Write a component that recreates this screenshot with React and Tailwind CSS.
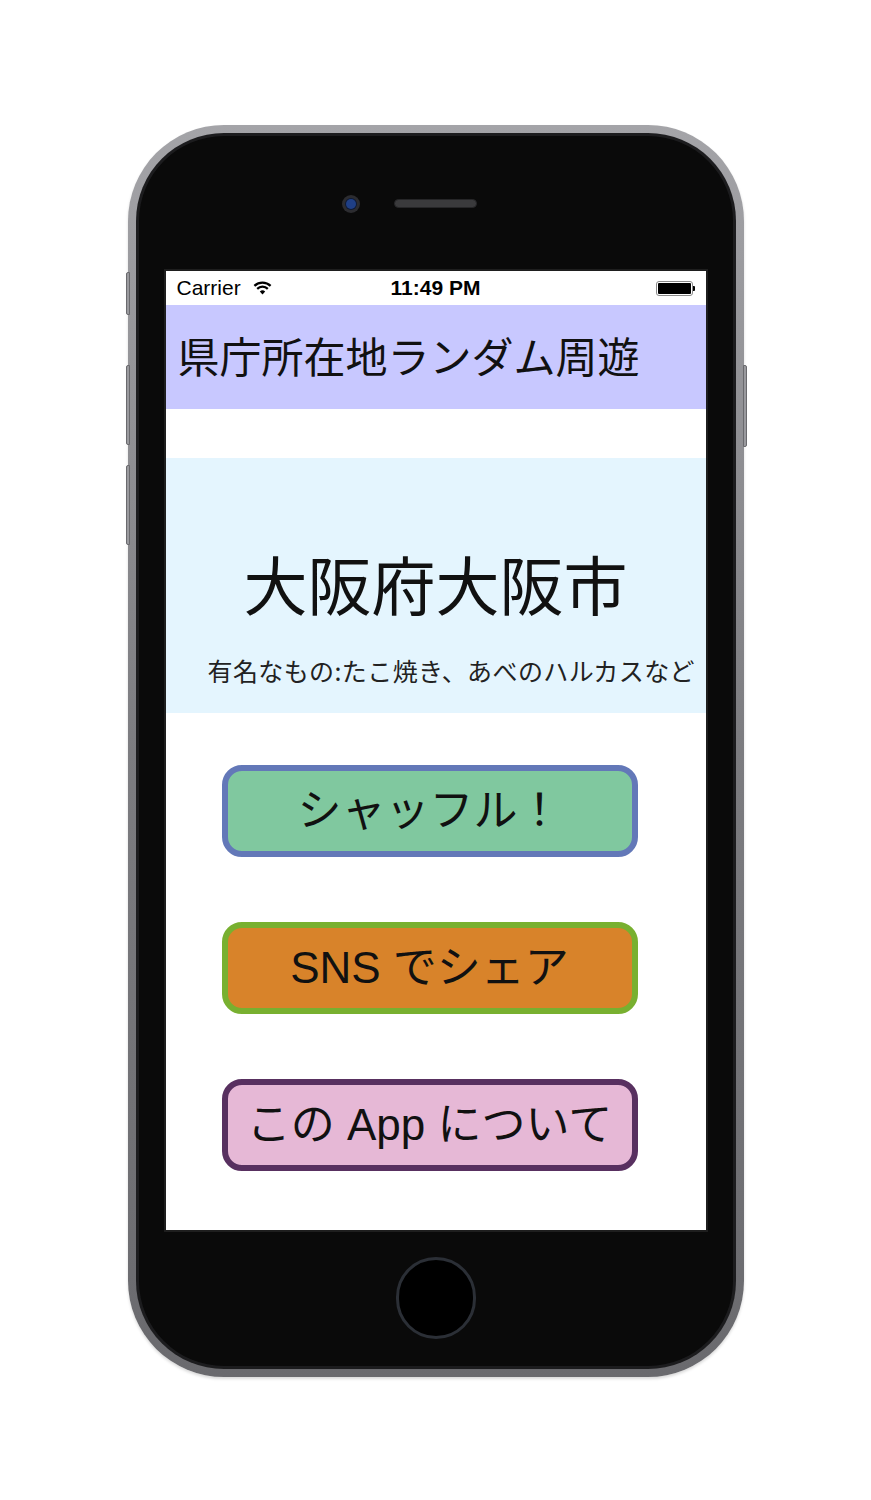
const latin = { fontFamily: '"Liberation Sans", "Noto Sans CJK JP", sans-serif' };

function WifiIcon() {
  return (
    <svg width="19" height="15" viewBox="0 0 18 15" className="ml-[12px]">
      <path d="M0.9 4.9 A11.5 11.5 0 0 1 17.1 4.9" fill="none" stroke="#000" strokeWidth="2.2" />
      <path d="M3.7 7.9 A7.5 7.5 0 0 1 14.3 7.9" fill="none" stroke="#000" strokeWidth="2.2" />
      <path d="M9 13.5 L6.3 10.6 A3.8 3.8 0 0 1 11.7 10.6 Z" fill="#000" />
    </svg>
  );
}

function Battery() {
  return (
    <div className="flex items-center">
      <div className="w-[37px] h-[15px] border border-[#8a8a8a] rounded-[3px] p-[1px]">
        <div className="w-full h-full bg-black rounded-[1px]" />
      </div>
      <div className="w-[2px] h-[5px] bg-black rounded-r-[1px]" />
    </div>
  );
}

function AppButton({ label, className }) {
  return (
    <div
      className={`w-[416px] h-[92px] ml-[56px] border-[6px] rounded-[20px] flex items-center justify-center text-[44px] text-[#111] leading-none ${className}`}
      style={latin}
    >
      <span>{label}</span>
    </div>
  );
}

function Screen() {
  return (
    <div
      className="w-[540px] h-[959px] bg-white flex flex-col ring-2 ring-[#1e1e1e]"
      style={{ fontFamily: '"Noto Sans CJK JP", sans-serif' }}
    >
      {/* status bar */}
      <div className="h-[34px] grid grid-cols-3 items-center px-[11px] text-black text-[21px]" style={latin}>
        <div className="flex items-center">
          <span>Carrier</span>
          <WifiIcon />
        </div>
        <div className="text-center font-semibold">11:49 PM</div>
        <div className="flex justify-end">
          <Battery />
        </div>
      </div>

      {/* header */}
      <div className="h-[104px] bg-[#C8C8FF] flex items-center pl-[12px] pb-[5px] text-[42px] text-[#111] leading-none">
        県庁所在地ランダム周遊
      </div>

      {/* city card */}
      <div className="mt-[49px] h-[255px] bg-[#E4F5FE] flex flex-col">
        <div className="pt-[92px] text-center text-[64px] leading-none text-[#111]">大阪府大阪市</div>
        <div className="mt-[44px] pl-[42px] text-[25px] tracking-[0.4px] leading-none text-[#222] whitespace-nowrap">
          有名なもの:たこ焼き、あべのハルカスなど
        </div>
      </div>

      {/* buttons */}
      <div className="mt-[52px] flex flex-col gap-[65px]">
        <AppButton label="シャッフル！" className="bg-[#80C89F] border-[#6378B8]" />
        <AppButton label="SNS でシェア" className="bg-[#D8832A] border-[#78B030]" />
        <AppButton label="この App について" className="bg-[#E6B8D6] border-[#583060]" />
      </div>
    </div>
  );
}

export default function App() {
  return (
    <div className="w-[871px] h-[1500px] bg-white pt-[125px]">
      <div className="relative mx-auto w-[616px] h-[1252px] rounded-[96px] bg-linear-to-b from-[#a4a4a8] via-[#7c7c80] to-[#6a6a6e] p-[8px] shadow-[0_2px_3px_rgba(0,0,0,0.15)]">
        {/* side buttons */}
        <div className="absolute left-[-2px] top-[147px] w-[4px] h-[43px] rounded-l-[2px] bg-[#9a9a9e] border border-[#6a6a6e]" />
        <div className="absolute left-[-2px] top-[240px] w-[4px] h-[80px] rounded-l-[2px] bg-[#9a9a9e] border border-[#6a6a6e]" />
        <div className="absolute left-[-2px] top-[340px] w-[4px] h-[80px] rounded-l-[2px] bg-[#9a9a9e] border border-[#6a6a6e]" />
        <div className="absolute right-[-3px] top-[240px] w-[4px] h-[82px] rounded-r-[2px] bg-[#9a9a9e] border border-[#6a6a6e]" />

        <div className="w-full h-full rounded-[88px] bg-[#1c1c1e] p-[3px]">
          <div className="w-full h-full rounded-[85px] bg-[#0a0a0a] flex flex-col items-center">
            {/* top: camera + speaker */}
            <div className="h-[135px] flex items-center gap-[34px]">
              <div className="w-[18px] h-[18px] rounded-full bg-[#2c2c30] flex items-center justify-center">
                <div className="w-[10px] h-[10px] rounded-full bg-[#1f3f86] ring-1 ring-[#0e1a35]" />
              </div>
              <div className="w-[83px] h-[9px] rounded-full bg-[#3a3a3c] border border-[#262628]" />
              <div className="w-[18px] h-[18px]" />
            </div>

            <Screen />

            {/* bottom: home button */}
            <div className="h-[136px] flex items-center justify-center">
              <div className="w-[80px] h-[82px] rounded-full border-[3px] border-[#2b2f36] bg-black" />
            </div>
          </div>
        </div>
      </div>
    </div>
  );
}
